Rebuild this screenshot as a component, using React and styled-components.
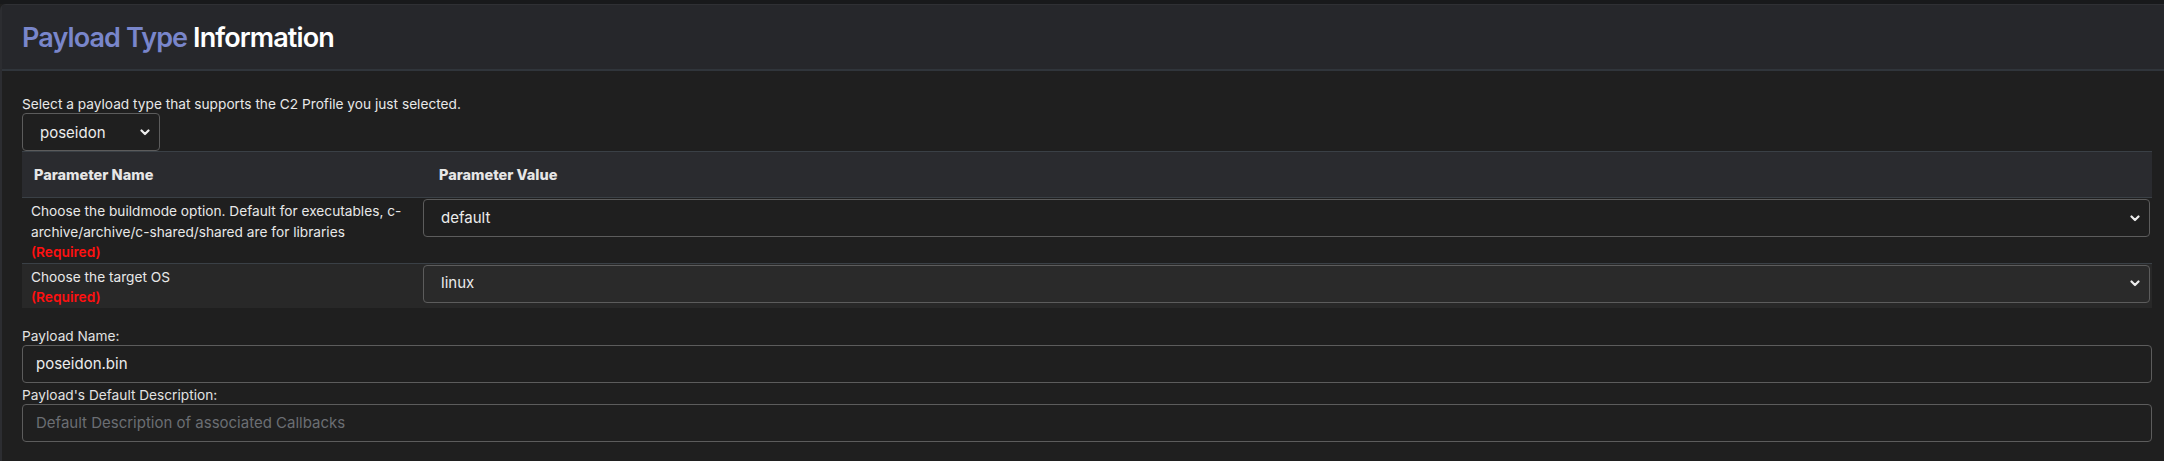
import React from 'react'
import styled, { createGlobalStyle } from 'styled-components'

const GlobalStyle = createGlobalStyle`
  html, body { margin: 0; padding: 0; background: #1f1f1f; }
  body { font-family: Inter, "Noto Sans", sans-serif; color: #e8e8e8; }
`

const Page = styled.div`
  background: #1f1f1f;
  border-top: 4px solid #18191b;
  height: 457px;
`
const Card = styled.div`
  border-left: 2px solid #2c2d31;
  border-top: 1px solid #2f3034;
  border-top-left-radius: 6px;
  height: 100%;
  box-sizing: border-box;
`
const Header = styled.div`
  height: 64px;
  background: #26272b;
  border-bottom: 2px solid #30353b;
  display: flex;
  align-items: center;
  padding-left: 20px;
`
const Title = styled.h1`
  margin: 0;
  font-size: 27px;
  font-weight: 600;
  letter-spacing: -0.9px;
  color: #ffffff;
`
const Accent = styled.span`
  color: #7986cb;
`
const Body = styled.div`
  padding: 24px 12px 0 20px;
`
const Hint = styled.div`
  font-size: 13.7px;
  line-height: 18px;
  height: 18px;
`
const SelectBox = styled.div`
  box-sizing: border-box;
  display: flex;
  align-items: center;
  justify-content: space-between;
  width: ${p => p.$width || '100%'};
  height: 38px;
  padding: 0 9px 0 17px;
  border: 1px solid #5c5c5c;
  border-radius: 4px;
  background: ${p => p.$bg || '#1f1f1f'};
  font-size: 15px;
  color: #ececec;
`
const Table = styled.div`
  display: grid;
  grid-template-columns: 401px 1fr;
`
const HeadCell = styled.div`
  background: #2a2b2f;
  border-top: 1px solid #3a4046;
  border-bottom: 1px solid #3a4046;
  height: 45px;
  display: flex;
  align-items: center;
  padding-left: ${p => p.$pad || 12}px;
  font-size: 14.5px;
  font-weight: 800;
  color: #e6e6e6;
`
const Cell = styled.div`
  background: ${p => (p.$alt ? '#282828' : '#1f1f1f')};
  border-bottom: ${p => (p.$last ? 'none' : '1px solid #3a4046')};
  padding: ${p => p.$value ? '1px 2px 0 0' : '3px 8px 0 9px'};
  font-size: 13.7px;
  line-height: 20.5px;
`
const Required = styled.div`
  color: #ff1010;
  font-weight: 600;
`
const Label = styled.div`
  font-size: 13.7px;
  line-height: 18px;
  margin-top: ${p => p.$top || 0}px;
  color: #e2e2e2;
`
const Input = styled.div`
  box-sizing: border-box;
  height: 38px;
  border: 1px solid #5c5c5c;
  border-radius: 4px;
  display: flex;
  align-items: center;
  padding-left: 13px;
  font-size: 15px;
  color: ${p => (p.$placeholder ? '#6b6e73' : '#ececec')};
`

const Chevron = () => (
  <svg width="10" height="7" viewBox="0 0 10 7">
    <path d="M1.5 1.5 L5 5 L8.5 1.5" fill="none" stroke="#ececec" strokeWidth="2.2" strokeLinecap="round" strokeLinejoin="round" />
  </svg>
)

const params = [
  { name: 'Choose the buildmode option. Default for executables, c-archive/archive/c-shared/shared are for libraries', value: 'default' },
  { name: 'Choose the target OS', value: 'linux' },
]

export default function App() {
  return (
    <Page>
      <GlobalStyle />
      <Card>
        <Header>
          <Title><Accent>Payload Type</Accent> Information</Title>
        </Header>
        <Body>
          <Hint>Select a payload type that supports the C2 Profile you just selected.</Hint>
          <SelectBox $width="138px">poseidon<Chevron /></SelectBox>
          <Table>
            <HeadCell>Parameter Name</HeadCell>
            <HeadCell $pad={16}>Parameter Value</HeadCell>
            {params.map((p, i) => (
              <React.Fragment key={p.value}>
                <Cell $alt={i % 2 === 1} $last={i === params.length - 1}>
                  {p.name}
                  <Required>(Required)</Required>
                </Cell>
                <Cell $value $alt={i % 2 === 1} $last={i === params.length - 1}>
                  <SelectBox $bg={i % 2 === 1 ? '#2a2a2a' : '#1f1f1f'}>{p.value}<Chevron /></SelectBox>
                </Cell>
              </React.Fragment>
            ))}
          </Table>
          <Label $top={19}>Payload Name:</Label>
          <Input>poseidon.bin</Input>
          <Label $top={3}>Payload's Default Description:</Label>
          <Input $placeholder>Default Description of associated Callbacks</Input>
        </Body>
      </Card>
    </Page>
  )
}
